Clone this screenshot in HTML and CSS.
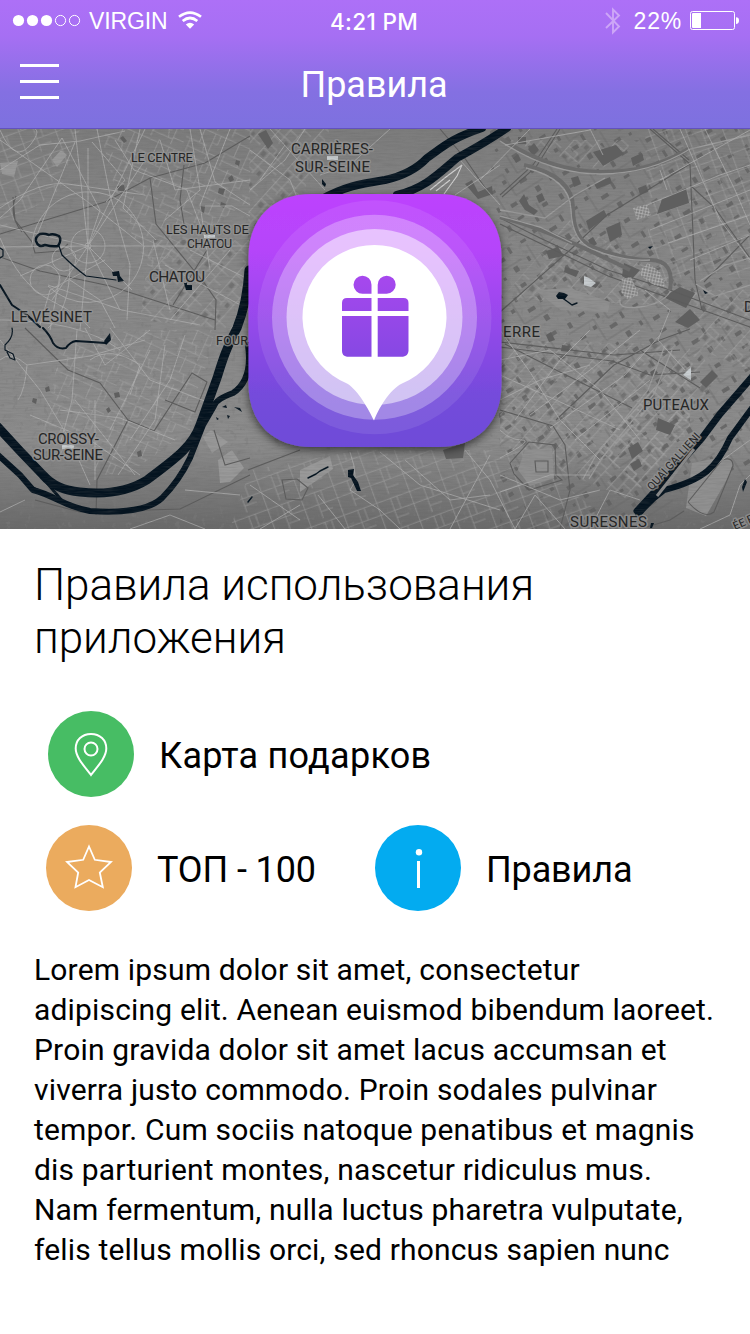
FILE: index.html
```html
<!DOCTYPE html>
<html lang="ru">
<head>
<meta charset="utf-8">
<title>Правила</title>
<link rel="stylesheet" href="styles.css">
</head>
<body>
<header class="header">
  <div class="status">
    <div class="status-left">
      <svg class="signal" width="70" height="13" viewBox="0 0 70 13"><g fill="#fff"><circle cx="6.500" cy="6.500" r="5.600"/><circle cx="20.500" cy="6.500" r="5.600"/><circle cx="34.500" cy="6.500" r="5.600"/></g><g fill="none" stroke="#fff"><circle cx="48.500" cy="6.500" r="5.100"/><circle cx="62.500" cy="6.500" r="5.100"/></g></svg>
      <span class="carrier">VIRGIN</span>
      <svg class="wifi" width="24" height="18" viewBox="0 0 24 18"><g fill="none" stroke="#fff" stroke-width="2.700"><path d="M1 5.800Q12-2.600 23 5.800"/><path d="M4.700 10Q12 4 19.300 10"/></g><path d="M7.800 13.400Q12 10 16.200 13.400L12 17.700Z" fill="#fff"/></svg>
    </div>
    <span class="clock">4:21 PM</span>
    <div class="status-right">
      <svg class="bluetooth" width="16" height="28" viewBox="0 0 16 28"><path d="M1 6L14 19.500L8 25.500V2.500L14 8.500L1 21" fill="none" stroke="#cda6f7" stroke-width="1.900"/></svg>
      <span class="percent">22%</span>
      <svg class="battery" width="50" height="20" viewBox="0 0 50 20"><rect x=".5" y=".5" width="44" height="18" rx="2" fill="none" stroke="#fff"/><path d="M3 2H11V17H3Q2 17 2 16V3Q2 2 3 2Z" fill="#fff"/><path d="M46 6.200Q49 6.200 49 9.500T46 13Z" fill="#fff"/></svg>
    </div>
  </div>
  <div class="navbar">
    <button class="menu" aria-label="Меню"><i></i><i></i><i></i></button>
    <h1 class="nav-title">Правила</h1>
  </div>
</header>

<svg class="map" width="750" height="400" viewBox="0 129 750 400">
  <defs>
    <linearGradient id="land" x1="0" y1="0" x2="0" y2="1"><stop offset="0" stop-color="#7c7c7c"/><stop offset=".25" stop-color="#868686"/><stop offset=".78" stop-color="#8c8c8c"/><stop offset="1" stop-color="#6a6a6a"/></linearGradient>
    <linearGradient id="tile" x1="0" y1="0" x2="0" y2="1"><stop offset="0" stop-color="#bd42fe"/><stop offset=".22" stop-color="#b545fa"/><stop offset=".8" stop-color="#744bdb"/><stop offset="1" stop-color="#6e4bd8"/></linearGradient>
    <linearGradient id="gift" x1="0" y1="275" x2="0" y2="357" gradientUnits="userSpaceOnUse"><stop offset="0" stop-color="#a748ee"/><stop offset="1" stop-color="#8648e3"/></linearGradient>
    <filter id="linen" x="0" y="0" width="100%" height="100%"><feTurbulence type="fractalNoise" baseFrequency=".06 .6" numOctaves="3" seed="4"/><feColorMatrix values="0 0 0 0 .12  0 0 0 0 .12  0 0 0 0 .12  1.500 0 0 0 -.55"/></filter>
    <filter id="grain" x="0" y="0" width="100%" height="100%"><feTurbulence type="fractalNoise" baseFrequency=".16 .14" numOctaves="3" seed="9"/><feColorMatrix values="0 0 0 0 .2  0 0 0 0 .2  0 0 0 0 .2  8 0 0 0 -5"/></filter>
    <filter id="drop" x="-20%" y="-20%" width="140%" height="140%"><feDropShadow dx="0" dy="3" stdDeviation="5" flood-color="#000" flood-opacity=".6"/></filter>
    <pattern id="streetsA" width="47" height="39" patternUnits="userSpaceOnUse" patternTransform="rotate(24) scale(.8)"><path d="M0 4H47M0 22H28M18 0V22M33 4V39M33 30H47M6 22V39M6 32H33M24 22L27 32M40 4V16H33" fill="none" stroke="#b4b4b4" stroke-width=".9"/></pattern>
    <pattern id="streetsB" width="53" height="43" patternUnits="userSpaceOnUse" patternTransform="rotate(-48) scale(.75)"><path d="M0 6H53M0 17H36M0 31H53M12 0V31M36 6V43M24 17V31M45 6V22H36M20 31V43M4 17V6" fill="none" stroke="#b2b2b2"/><path d="M26 8h7v6h-7zM38 24h5v4h-5zM3 22h6v5h-6z" fill="#626262"/></pattern>
    <pattern id="streetsC" width="41" height="37" patternUnits="userSpaceOnUse" patternTransform="rotate(-20) scale(.85)"><path d="M0 5H41M0 20H41M9 0V37M26 5V37M26 29H41M34 5V20" fill="none" stroke="#aeaeae" stroke-width=".9"/></pattern>
    <pattern id="lots" width="61" height="57" patternUnits="userSpaceOnUse" patternTransform="rotate(-32)"><path d="M4 5h4v6h-4zM18 3h7v3h-7zM33 12h3v5h-3zM46 4h6v4h-6zM8 24h6v3h-6zM24 21h4v4h-4zM39 29h8v4h-8zM54 23h3v7h-3zM5 41h3v5h-3zM19 45h7v4h-7zM35 47h3v3h-3zM49 43h5v6h-5z" fill="#606060"/><path d="M0 15H29V40H61M42 0V22H61M12 30V57" fill="none" stroke="#666" stroke-width=".8"/></pattern>
    <pattern id="hatch" width="3" height="3" patternUnits="userSpaceOnUse" patternTransform="rotate(12)"><rect width="3" height="3" fill="#858585"/><path d="M0 0H3M0 0V3" stroke="#c9c9c9"/></pattern>
  </defs>

  <rect y="129" width="750" height="400" fill="url(#land)"/>
  <rect y="129" width="750" height="400" filter="url(#grain)" opacity=".4"/>

  <!-- street grids by district -->
  <path d="M490 129H750V480H700L640 529H500V450Z" fill="url(#lots)" opacity=".8"/>
  <g opacity=".6">
    <path d="M100 129L250 129L250 200L150 270L120 210Z M130 330L215 330L190 430L120 480L40 450L60 350Z" fill="url(#streetsA)"/>
    <path d="M150 240L250 240L235 330L140 320Z M500 340L690 345L690 430L630 500L500 445Z M570 220L690 290L665 305L500 300Z" fill="url(#streetsB)"/>
    <path d="M645 129H750V280L700 270L650 290Z M250 470L360 450L520 450L620 529H230Z M0 129H80L60 190L0 230Z" fill="url(#streetsC)"/>
    <path d="M250 129H330L300 200L248 240Z M590 440L700 350L715 380L640 490Z M500 140H640L600 170L540 150Z M690 290H750V370L700 350Z" fill="url(#streetsB)"/>
  </g>

  <!-- industrial blocks -->
  <g fill="#5f5f5f">
    <path d="M593 152L616 145L624 154L603 166ZM594 184L610 177L612 183L597 189ZM631 158L642 153L644 160L633 166ZM662 199L686 188L689 203L657 214ZM519 201L524 194L529 205L538 211L534 215L525 210ZM586 221L604 210L607 216L589 230ZM606 228L620 222L622 235L610 242ZM546 251L558 247L564 256L549 259ZM624 263L640 270L630 281L622 276ZM663 297L680 287L695 293L686 308ZM675 322L690 309L700 320L688 328ZM258 134L266 130L273 143L268 149ZM465 184L472 180L478 192L492 186L493 194L478 199ZM443 450L465 443L463 458L446 459ZM628 448L638 442L643 451L632 459ZM658 418L675 425L670 435L656 430ZM700 382L712 370L718 376L706 388ZM518 137h8v7h-8zM528 149l6-6 5 7-6 6zM513 158l5-4 3 6-5 3zM120 138l3-2 4 5-3 2zM117 186l7-1 1 6-7 1z"/>
    <path d="M571 178l7-2 3 8-7 3zM536 196l6-3 3 7-6 3zM638 188l8-3 2 7-8 3zM588 240l5-3 4 7-5 3zM565 267l14 4-3 6-12-5zM584 278l15 5-3 5-14-5zM228 178l4-3 2 5-4 2zM219 188l6 1-2 6-5-2zM200 206l5 1-1 6-4-2zM221 202l5 2-2 4-4-2zM236 160l4 1-1 5-4-2z"/>
    <path d="M630 464l9-5 3 7-8 5zM650 372l5-3 3 4-6 4zM546 335l5-3 4 8-6 2zM562 345l8 1-1 6-8-1zM33 398l4 1-1 5-4-2zM45 388l4-2 1 5-4 1zM114 393l5-1 1 5-5 1zM106 409l3-2 2 4-3 2zM137 452l4-2 1 6-4 1z"/>
  </g>
  <g fill="#999"><path d="M52 160L61 150L67 155L57 167ZM0 163L18 161L14 177L2 174ZM203 437L211 430L228 442L212 453ZM218 460L232 450L244 468L230 482L220 483ZM300 470L330 456L333 469L300 492Z"/></g>
  <g fill="#909090"><path d="M692 463L722 457L733 462L730 474L706 516L686 508ZM525 450L552 448L554 478L530 486L518 470ZM535 290L570 288L610 302L608 312L560 310Z"/></g>

  <!-- dark railways and avenues -->
  <g fill="none" stroke="#5c5c5c" stroke-width="1.100">
    <path d="M0 234L105 202L150 178L205 163L250 136M150 178L156 224L205 284L216 300L215 330M184 165L180 200L184 224M0 257L40 271L110 286L215 320M207 250L173 305M25 328L68 370L100 383L128 420L97 480L96 515M128 420L154 431L192 373L207 382L195 412L165 400"/>
    <path d="M557 129L533 165L500 195M560 129L536 167L502 197M440 129L464 157L490 195M650 129L690 164L695 280L702 310M653 129L689 160M690 164L607 215L570 250L500 312M500 218L540 238L608 270L670 290L750 320M500 224L608 276L750 327M500 347L612 361L650 375L700 372M500 342L614 355L680 350M556 420L614 365L660 340L690 329M500 410L553 426L565 445L570 490L560 529M248 470L300 450M505 344L560 372L632 408M640 350L700 388M704 282L750 235M690 185L715 208L750 258"/>
    <path d="M510 463L529 442L555 445L556 475L562 480L529 490L514 474ZM535 461h13v11h-12zM13 197L15 220L32 242L35 253L60 251L68 244M35 500L80 512L180 509L250 475M282 480L297 479L308 488L302 500L286 499ZM214 430L225 465L250 458M684 511L670 520L640 529M688 502L722 460Q733 456 733 466L714 512Q704 520 688 502M16 196Q8 215 22 232"/>
  </g>
  <g fill="none" stroke="#6c6c6c" stroke-width="4"><path d="M500 138Q550 171 600 172T690 148"/><path d="M524 165Q573 176 573 208T593 247Q625 260 650 260T670 290"/><path d="M500 217Q550 230 630 270"/></g>
  <g fill="none" stroke="#9c9c9c" stroke-width="1.300"><path d="M500 141Q550 174 600 174T690 149L750 135M526 168Q570 179 571 210T592 249Q624 262 650 260M500 210L545 218L575 195L605 178M500 216L540 227L572 243M620 300Q618 310 640 307T670 292M696 284L715 296L750 285M700 281L725 265L750 258M583 479L596 455L648 390L665 345M589 479L602 458L654 394L672 350"/></g>

  <!-- light streets -->
  <g fill="none" stroke="#b3b3b3" stroke-width=".85" opacity=".85">
    <path d="M88 246L75 129M88 246L88 148M88 246L145 129M88 246L0 225M88 246L0 247M88 246L20 276M88 246L52 300M88 246L80 330M88 246L120 310M88 246L132 290M88 246L250 246M88 246L145 160M88 246L100 210L62 138"/>
    <circle cx="88" cy="246" r="17"/><circle cx="88" cy="246" r="3"/><circle cx="45" cy="280" r="15"/><circle cx="64" cy="259" r="12"/><path d="M32 246A57 57 0 0 1 120 201A57 57 0 0 1 130 284A57 57 0 0 1 48 286"/>
    <path d="M0 140L88 202L145 247M0 170L40 145L80 141L125 131M0 130Q15 165 31 144T20 129M0 208Q40 180 68 184T145 195M62 138L20 200L0 218M75 142L35 240M92 142L125 180L106 202M97 129L110 195L130 265L127 320M140 129L123 208L156 240M115 140L134 170L187 190L207 243M160 140L175 190L250 180M0 238Q20 285 50 300T90 328"/>
    <path d="M70 263Q70 310 48 328M60 275L50 330M70 280L100 300L115 328M48 285L122 310L200 325M105 260L50 290L40 325M0 340L40 390L70 440L90 485M0 360Q10 350 27 365Q25 390 18 400M27 365L90 356L145 340M85 328L105 365L150 330M90 360Q110 345 140 365L130 395M77 330L72 400L60 445M110 328L150 380L215 405M150 350L110 430M95 400V480M75 400L135 475M165 345L155 420L118 475M30 415L90 440L140 475M60 410L120 418L175 440M185 335L170 380L130 440M0 320Q80 320 120 350"/>
    <path d="M200 129L215 182L250 205M190 129L200 190L165 220M230 129L200 205L210 270M205 206H232L250 216M153 240L170 310M165 265L250 310M170 320L230 250M190 250L250 280"/>
    <path d="M250 190L285 160L305 129M250 150L290 180L300 205M270 129L325 190M285 145L260 180M390 129L350 165L320 175M455 195L500 165M480 180L530 129M500 205L460 160M590 129L603 155M505 145L590 130M645 290L670 310L658 340L685 370M680 129L720 220L750 260M705 129L735 190L750 225M660 180L750 130M640 208L720 175L750 165M650 230L750 190M668 243L750 215M690 260L750 235M660 170L667 190"/>
    <path d="M500 330L530 372L560 420L600 460M500 360L550 350L600 390L640 440M500 400L540 380L590 365M500 375L556 400L620 430M515 420L560 360L590 330M530 415L590 370L640 330M550 428L625 375L660 335M575 440L650 380M500 430Q510 440 522 440T500 458M500 475L560 500L600 490M500 492L550 475L590 475M515 529L535 495L565 529M590 529L610 490L640 500M700 529L730 515L740 485L750 475M695 480L750 440"/>
    <path d="M350 452Q360 480 350 490L380 510L400 529M380 452L420 485L500 510M405 460L450 500L490 495M465 450L490 480L515 529M490 455L450 529M300 505L260 529M318 495L345 529M250 485L300 520M0 512L25 500M130 529L170 515L205 529M185 490L240 495"/>
  </g>
  <g fill="url(#hatch)"><path d="M633 208L647 204L651 215L637 220ZM622 279L631 277L639 295L627 299L621 292ZM641 269L648 263L660 272L666 287L654 285L641 276Z"/></g>
  <g fill="none" stroke="#d2d2d2" stroke-width="1.100"><path d="M430 190L446 177L462 165L457 176L444 194M436 191L450 180"/></g>
  <g fill="#c8cdd0"><path d="M584 276l5 2 7 5-5 4-7-2zM691 367v13l-8-5zM204 235h11v3h-11zM62 445h12v4h-12zM327 156h11v4h-11z"/></g>

  <!-- water -->
  <g fill="none" stroke="#04131f" stroke-linecap="round" stroke-linejoin="round">
    <path stroke-width="8" d="M482 128C450 139 443 147 427 158Q412 174 385 180C360 184 346 186 320 200M507 128Q485 143 457 158C437 175 425 188 397 195"/>
    <path stroke-width="9" d="M249 270Q247 303 237 328C226 349 223 359 217 378L200 425C192 448 172 461 147 480C124 494 97 494 80 492Q56 490 43 475L20 451L-3 426"/>
    <path stroke-width="6" d="M248 345Q253 380 233 393Q216 399 214 406L203 425L190 458Q179 481 162 498C148 511 118 513 90 511C63 506 56 496 33 490L20 475L-3 454"/>
    <path stroke-width="3" d="M43 478L63 502M33 488L60 500"/>
    <path stroke-width="7" d="M752 377L720 414L702 438L660 486L637 511"/><path stroke-width="6" d="M752 408L730 438C717 467 704 480 664 490Q650 500 638 515"/>
    <path stroke-width="2.500" d="M40 234Q35 237 36 241Q38 248 45 245Q53 247 58 246Q62 240 59 236Q53 233 49 235Q44 233 40 234Z"/>
    <path stroke-width="1.200" d="M59 246L62 255Q75 268 86 276L116 280M12 328Q14 337 5 345V350L13 354L15 360L10 358L7 352M0 248L3 250V256L0 258"/>
    <path stroke-width="2" d="M0 285L12 305L27 315L40 327M43 328Q50 335 53 343Q58 350 66 348Q70 342 76 341L106 343"/>
    <path stroke-width="1.400" d="M561 297L568 302L572 305L577 303M308 478L316 474L320 471L328 467M248 502L252 497"/>
  </g>
  <g fill="#04131f"><path d="M112 272L119 271L120 276L124 281L118 282L117 276H113ZM184 283h3v2h5v5h-6zM104 341L110 333L111 340L106 345ZM556 296L559 292L564 293L568 295L565 299L558 299ZM348 470L354 469L353 475L358 482L361 491L357 491L351 478L348 477ZM322 179L326 184L325 187L322 184ZM648 247l5-1-3 3zM703 290l5 3-3 1zM222 407l4-2 1 3zM234 407l6 1 2 4zM227 415l3 1-2 3zM216 417l3 2-2 1zM742 487l3-8 2 3-4 10zM651 523l3 0-2 5h-2z"/></g>
  <path d="M661 499L698 452" stroke="#8b8b8b" stroke-width="3" transform="translate(-4 -3)"/>
  <rect y="129" width="750" height="400" filter="url(#linen)" opacity=".3"/>

  <!-- place names -->
  <g class="places">
    <text x="131" y="162" font-size="13" textLength="62">LE CENTRE</text>
    <text x="291" y="154" font-size="15" textLength="82">CARRIÈRES-</text>
    <text x="295" y="172" font-size="15" textLength="75">SUR-SEINE</text>
    <text x="166" y="234" font-size="13" textLength="83">LES HAUTS DE</text>
    <text x="187" y="248" font-size="12.500" textLength="45">CHATOU</text>
    <text x="149" y="282" font-size="15.500" textLength="56">CHATOU</text>
    <text x="11" y="322" font-size="15" textLength="81">LE VÉSINET</text>
    <text x="216" y="345" font-size="12.500" textLength="32">FOUR</text>
    <text x="503" y="337" font-size="15" textLength="37">ERRE</text>
    <text x="643" y="410" font-size="15" textLength="66">PUTEAUX</text>
    <text x="38" y="444" font-size="15" textLength="61">CROISSY-</text>
    <text x="33" y="460" font-size="15" textLength="70">SUR-SEINE</text>
    <text x="570" y="527" font-size="15" textLength="77">SURESNES</text>
    <text x="744" y="312" font-size="14">D</text>
    <text transform="translate(652 491) rotate(-48)" font-size="11" textLength="73">QUAI GALLIENI</text>
    <text transform="translate(735 530) rotate(-24)" font-size="11">ÉE F</text>
  </g>

  <!-- app tile -->
  <path d="M312 194H438C477 194 501.500 218 501.500 257V384C501.500 423 477 447 438 447H312C273 447 248.500 423 248.500 384V257C248.500 218 273 194 312 194Z" fill="url(#tile)" filter="url(#drop)"/>
  <circle cx="374.500" cy="317.300" r="117" fill="#fff" fill-opacity=".09"/>
  <circle cx="374.500" cy="317.200" r="102.500" fill="#fff" fill-opacity=".28"/>
  <circle cx="374.500" cy="317" r="88" fill="#fff" fill-opacity=".5"/>
  <path d="M347 383.500A72 72 0 1 1 402 383.500C389 390 378 410 374 420.500C369 410 358 390 347 383.500Z" fill="#fff"/>
  <g fill="url(#gift)">
    <path d="M371.500 293.700H362.700A9 9 0 1 1 371.500 284.700ZM377.700 293.700H386.700A9 9 0 1 0 377.700 284.700Z"/>
    <path d="M342 311V303Q342 298 347 298H371.500V311ZM377.700 298H403.500Q408.500 298 408.500 303V311H377.700Z"/>
    <path d="M342 316H371.500V356.700H347Q342 356 342 351ZM377.700 316H408.500V351Q408 356 403 356.700H377.700Z"/>
  </g>
</svg>

<main class="content">
  <h2 class="title">Правила использования<br>приложения</h2>
  <div class="links">
    <a class="link link-map">
      <svg width="86" height="86" viewBox="0 0 86 86"><circle cx="43" cy="43" r="43" fill="#47bd64"/><path d="M43 64C36 55 27.700 46 27.700 37.500C27.700 29 34 23 43 23S58.300 29 58.300 37.500C58.300 46 50 55 43 64Z" fill="none" stroke="#fff" stroke-width="2"/><circle cx="43" cy="38" r="6.500" fill="none" stroke="#fff" stroke-width="2"/></svg>
      <span>Карта подарков</span>
    </a>
    <a class="link link-top">
      <svg width="86" height="86" viewBox="0 0 86 86"><circle cx="43" cy="43" r="43" fill="#ebab5e"/><path d="M43 21.500L48.800 34.800L65 37L53.800 47.500L56.800 62.200L43 55L29.500 62.200L32.200 47.500L21 37L37.200 34.800Z" fill="none" stroke="#fff" stroke-width="1.800"/></svg>
      <span>ТОП - 100</span>
    </a>
    <a class="link link-rules">
      <svg width="86" height="86" viewBox="0 0 86 86"><circle cx="43" cy="43" r="43" fill="#03abf0"/><circle cx="44" cy="27.300" r="3.200" fill="#fff"/><path d="M42 36H45V63H42Z" fill="#fff"/></svg>
      <span>Правила</span>
    </a>
  </div>
  <p class="text">Lorem ipsum dolor sit amet, consectetur<br>adipiscing elit. Aenean euismod bibendum laoreet.<br>Proin gravida dolor sit amet lacus accumsan et<br>viverra justo commodo. Proin sodales pulvinar<br>tempor. Cum sociis natoque penatibus et magnis<br>dis parturient montes, nascetur ridiculus mus.<br>Nam fermentum, nulla luctus pharetra vulputate,<br>felis tellus mollis orci, sed rhoncus sapien nunc</p>
</main>
</body>
</html>
```
FILE: styles.css
```css
* { box-sizing: border-box; }
body { margin: 0; width: 750px; height: 1334px; overflow: hidden; background: #fff; color: #000; font-family: Roboto, sans-serif; }
svg { display: block; flex: none; }

.header { height: 129px; background: linear-gradient(#ad70f7 0, #a66ff3 36px, #8470e2 92px, #7d71df 128px); border-bottom: 1px solid #6252bd; color: #fff; }
.status { height: 41px; padding: 0 10px 0 12px; display: grid; grid-template-columns: 1fr auto 1fr; align-items: center; font: 23px/39px "Liberation Sans", sans-serif; }
.status-left, .status-right { display: flex; align-items: center; }
.status-right { justify-content: flex-end; }
.carrier { margin-left: 7px; padding-top: 2px; letter-spacing: -.1px; }
.wifi { margin-left: 10px; margin-bottom: 1px; }
.clock { margin: 1px 4px 0 0; font-family: Inter, sans-serif; font-weight: 500; font-size: 22.500px; letter-spacing: .35px; }
.bluetooth { margin-right: 13px; }
.percent { padding-top: 2px; letter-spacing: .8px; }
.battery { margin-left: 8px; }

.navbar { height: 87px; display: grid; grid-template-columns: 59px 1fr 61px; align-items: center; }
.menu { margin: -7px 0 0 20px; padding: 0; width: 39px; height: 35px; border: 0; background: none; display: flex; flex-direction: column; justify-content: space-between; }
.menu i { display: block; width: 39px; height: 3px; background: #fff; }
.nav-title { margin: 0; text-align: center; font-weight: 400; font-size: 36px; line-height: 42px; letter-spacing: -.05px; }

.map { width: 750px; height: 400px; }
.places { font-family: Roboto, sans-serif; fill: #262626; stroke: #949494; stroke-width: 3px; stroke-opacity: .75; paint-order: stroke; stroke-linejoin: round; }

.content { padding: 30px 30px 0 34px; }
.title { margin: 0; font-weight: 300; font-size: 44px; line-height: 53px; letter-spacing: -.04px; white-space: nowrap; }
.links { margin: 46px 0 0 12px; display: grid; grid-template-columns: 329px auto; row-gap: 28px; }
.link { display: flex; align-items: center; gap: 25px; font-size: 36px; line-height: 42px; letter-spacing: -.12px; white-space: nowrap; }
.link-map { grid-column: 1 / 3; margin-left: 2px; letter-spacing: .25px; }
.link span { padding-top: 3px; }
.text { margin: 39px 0 0; font-size: 30px; line-height: 40px; letter-spacing: .17px; white-space: nowrap; }
```
